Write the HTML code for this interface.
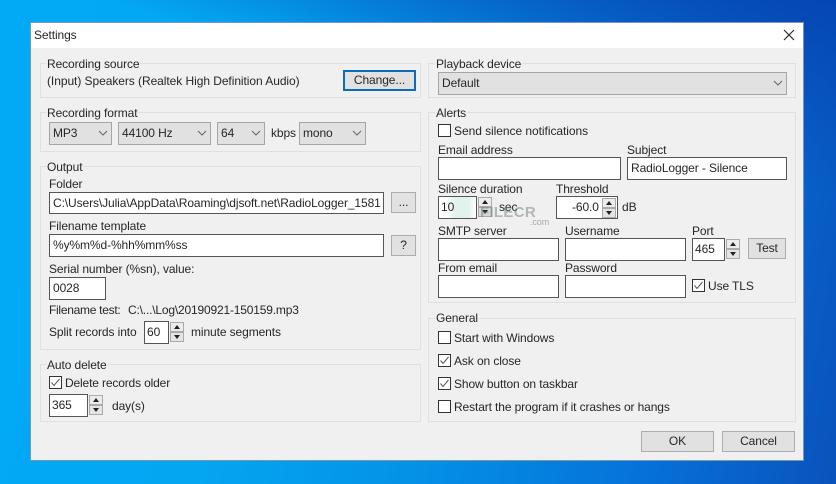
<!DOCTYPE html>
<html><head><meta charset="utf-8"><style>
html,body{margin:0;padding:0}
body{width:836px;height:484px;overflow:hidden;position:relative;font-family:"Liberation Sans",sans-serif;font-size:12px;letter-spacing:-.1px;color:#262626;
background:linear-gradient(100deg,#02aaf6 0%,#04a6f2 30%,#0490e6 55%,#0670d8 80%,#0a52bc 100%)}
#desk{position:absolute;left:0;top:0;width:836px;height:484px;background:linear-gradient(195deg,#0646b4 0%,rgba(6,80,190,0) 28%)}
#win{position:absolute;left:30px;top:22px;width:774px;height:439px;background:#f0f0f0;box-sizing:border-box;border:1px solid #7698b0}
#tb{position:absolute;left:31px;top:23px;width:772px;height:25px;background:#fff}
.t{position:absolute;white-space:nowrap;line-height:14px;height:14px}
.g{position:absolute;box-sizing:border-box;border:1px solid #e0e0e0}
.l{position:absolute;white-space:nowrap;line-height:14px;height:14px;background:#f0f0f0;padding:0 1px}
.i{position:absolute;box-sizing:border-box;background:#fff;border:1px solid #555;line-height:20px;padding-left:3px;white-space:nowrap;overflow:hidden}
.c{position:absolute;box-sizing:border-box;background:#e1e1e1;border:1px solid #a5a5a5;line-height:21px;padding-left:3px;white-space:nowrap}
.b{position:absolute;box-sizing:border-box;background:#e1e1e1;border:1px solid #adadad;line-height:19px;text-align:center;white-space:nowrap}
.k{position:absolute;width:13px;height:13px;box-sizing:border-box;background:#fff;border:1px solid #333}
svg{position:absolute;display:block}
</style></head><body>
<div id="desk"></div>
<div id="win"></div>
<div id="tb"></div>
<div class="t" style="left:34px;top:28px">Settings</div>
<svg style="left:783px;top:29px" width="12" height="12"><path d="M1 1L11 11M11 1L1 11" stroke="#222" stroke-width="1.1" fill="none"/></svg>

<div class="g" style="left:40px;top:63px;width:381px;height:35px"></div>
<div class="l" style="left:46px;top:57px">Recording source</div>
<div class="t" style="left:47px;top:74px;letter-spacing:-.06px">(Input) Speakers (Realtek High Definition Audio)</div>
<div class="b" style="left:343px;top:70px;width:73px;height:21px;border:2px solid #0e6cb4;line-height:17px">Change...</div>

<div class="g" style="left:40px;top:112px;width:381px;height:40px"></div>
<div class="l" style="left:46px;top:106px">Recording format</div>
<div class="c" style="left:49px;top:122px;width:63px;height:23px">MP3</div>
<svg style="left:98px;top:130px" width="11" height="7"><path d="M1 1L5 5L9 1" stroke="#666" fill="none"/></svg>
<div class="c" style="left:118px;top:122px;width:93px;height:23px">44100 Hz</div>
<svg style="left:197px;top:130px" width="11" height="7"><path d="M1 1L5 5L9 1" stroke="#666" fill="none"/></svg>
<div class="c" style="left:217px;top:122px;width:48px;height:23px">64</div>
<svg style="left:251px;top:130px" width="11" height="7"><path d="M1 1L5 5L9 1" stroke="#666" fill="none"/></svg>
<div class="t" style="left:271px;top:126px">kbps</div>
<div class="c" style="left:299px;top:122px;width:67px;height:23px">mono</div>
<svg style="left:352px;top:130px" width="11" height="7"><path d="M1 1L5 5L9 1" stroke="#666" fill="none"/></svg>

<div class="g" style="left:40px;top:166px;width:381px;height:184px"></div>
<div class="l" style="left:46px;top:160px">Output</div>
<div class="t" style="left:49px;top:177px">Folder</div>
<div class="i" style="left:49px;top:192px;width:335px;height:22px">C:\Users\Julia\AppData\Roaming\djsoft.net\RadioLogger_158<span style="letter-spacing:-2px">1</span></div>
<div class="b" style="left:391px;top:192px;width:25px;height:21px">...</div>
<div class="t" style="left:49px;top:219px">Filename template</div>
<div class="i" style="left:49px;top:234px;width:335px;height:23px">%y%m%d-%hh%mm%ss</div>
<div class="b" style="left:391px;top:235px;width:25px;height:21px">?</div>
<div class="t" style="left:49px;top:262px">Serial number (%sn), value:</div>
<div class="i" style="left:49px;top:277px;width:57px;height:23px">0028</div>
<div class="t" style="left:49px;top:303px;letter-spacing:-.28px">Filename test:</div>
<div class="t" style="left:128px;top:303px;letter-spacing:-.18px">C:\...\Log\20190921-150159.mp3</div>
<div class="t" style="left:49px;top:325px">Split records into</div>
<div class="i" style="left:144px;top:321px;width:25px;height:23px;padding-left:2px">60</div>
<svg style="left:170px;top:322px" width="14" height="20"><rect x=".5" y=".5" width="13" height="9" fill="#ececec" stroke="#aaa"/><rect x=".5" y="10.5" width="13" height="9" fill="#e4e4e4" stroke="#aaa"/><path d="M7 3L10 7H4Z M4 13H10L7 17Z" fill="#222"/></svg>
<div class="t" style="left:191px;top:325px">minute segments</div>

<div class="g" style="left:40px;top:364px;width:381px;height:58px"></div>
<div class="l" style="left:46px;top:358px">Auto delete</div>
<div class="k" style="left:49px;top:376px"></div>
<svg style="left:49px;top:376px" width="13" height="13"><path d="M2.5 6.5L5 9.5L10.5 3" stroke="#555" fill="none"/></svg>
<div class="t" style="left:65px;top:376px;letter-spacing:-.15px">Delete records older</div>
<div class="i" style="left:49px;top:394px;width:39px;height:23px;padding-left:2px">365</div>
<svg style="left:89px;top:395px" width="14" height="20"><rect x=".5" y=".5" width="13" height="9" fill="#ececec" stroke="#aaa"/><rect x=".5" y="10.5" width="13" height="9" fill="#e4e4e4" stroke="#aaa"/><path d="M7 3L10 7H4Z M4 13H10L7 17Z" fill="#222"/></svg>
<div class="t" style="left:112px;top:399px">day(s)</div>

<div class="g" style="left:428px;top:63px;width:368px;height:35px"></div>
<div class="l" style="left:435px;top:57px">Playback device</div>
<div class="c" style="left:438px;top:72px;width:349px;height:23px">Default</div>
<svg style="left:773px;top:80px" width="11" height="7"><path d="M1 1L5 5L9 1" stroke="#666" fill="none"/></svg>

<div class="g" style="left:428px;top:112px;width:368px;height:191px"></div>
<div class="l" style="left:435px;top:106px">Alerts</div>
<div class="k" style="left:438px;top:124px"></div>
<div class="t" style="left:454px;top:124px;letter-spacing:-.05px">Send silence notifications</div>
<div class="t" style="left:438px;top:143px">Email address</div>
<div class="t" style="left:627px;top:143px">Subject</div>
<div class="i" style="left:438px;top:157px;width:183px;height:23px"></div>
<div class="i" style="left:627px;top:157px;width:160px;height:23px">RadioLogger - Silence</div>
<div class="t" style="left:438px;top:182px">Silence duration</div>
<div class="t" style="left:556px;top:182px">Threshold</div>
<div class="i" style="left:438px;top:196px;width:39px;height:23px;padding-left:2px;background:linear-gradient(90deg,#fff 20%,#e2f3ec 45%,#e2f3ec 80%,#fff)">10</div>
<svg style="left:478px;top:197px" width="14" height="20"><rect x=".5" y=".5" width="13" height="9" fill="#ececec" stroke="#aaa"/><rect x=".5" y="10.5" width="13" height="9" fill="#d8d8d8" stroke="#aaa"/><path d="M7 3L10 7H4Z M4 13H10L7 17Z" fill="#222"/></svg>
<div class="t" style="left:499px;top:200px">sec</div>
<div class="t" style="left:480px;top:206px;font-weight:bold;font-size:15px;letter-spacing:.3px;color:rgba(110,125,125,.5)">FILECR</div>
<div class="t" style="left:530px;top:215px;font-size:9px;color:#aaa">.com</div>
<div class="i" style="left:556px;top:196px;width:62px;height:23px;padding-left:15px">-60.0</div>
<svg style="left:602px;top:198px" width="14" height="20"><rect x=".5" y=".5" width="13" height="9" fill="#ececec" stroke="#aaa"/><rect x=".5" y="10.5" width="13" height="9" fill="#e4e4e4" stroke="#aaa"/><path d="M7 3L10 7H4Z M4 13H10L7 17Z" fill="#222"/></svg>
<div class="t" style="left:622px;top:200px">dB</div>
<div class="t" style="left:438px;top:224px">SMTP server</div>
<div class="t" style="left:565px;top:224px">Username</div>
<div class="t" style="left:692px;top:224px">Port</div>
<div class="i" style="left:438px;top:238px;width:121px;height:23px"></div>
<div class="i" style="left:565px;top:238px;width:121px;height:23px"></div>
<div class="i" style="left:692px;top:238px;width:33px;height:23px;padding-left:2px">465</div>
<svg style="left:726px;top:239px" width="14" height="20"><rect x=".5" y=".5" width="13" height="9" fill="#ececec" stroke="#aaa"/><rect x=".5" y="10.5" width="13" height="9" fill="#e4e4e4" stroke="#aaa"/><path d="M7 3L10 7H4Z M4 13H10L7 17Z" fill="#222"/></svg>
<div class="b" style="left:748px;top:238px;width:38px;height:21px">Test</div>
<div class="t" style="left:438px;top:261px">From email</div>
<div class="t" style="left:565px;top:261px">Password</div>
<div class="i" style="left:438px;top:275px;width:121px;height:23px"></div>
<div class="i" style="left:565px;top:275px;width:121px;height:23px"></div>
<div class="k" style="left:692px;top:279px"></div>
<svg style="left:692px;top:279px" width="13" height="13"><path d="M2.5 6.5L5 9.5L10.5 3" stroke="#555" fill="none"/></svg>
<div class="t" style="left:708px;top:279px">Use TLS</div>

<div class="g" style="left:428px;top:318px;width:368px;height:104px"></div>
<div class="l" style="left:435px;top:311px">General</div>
<div class="k" style="left:438px;top:331px"></div>
<div class="t" style="left:454px;top:331px">Start with Windows</div>
<div class="k" style="left:438px;top:354px"></div>
<svg style="left:438px;top:354px" width="13" height="13"><path d="M2.5 6.5L5 9.5L10.5 3" stroke="#555" fill="none"/></svg>
<div class="t" style="left:454px;top:354px">Ask on close</div>
<div class="k" style="left:438px;top:377px"></div>
<svg style="left:438px;top:377px" width="13" height="13"><path d="M2.5 6.5L5 9.5L10.5 3" stroke="#555" fill="none"/></svg>
<div class="t" style="left:454px;top:377px">Show button on taskbar</div>
<div class="k" style="left:438px;top:400px"></div>
<div class="t" style="left:454px;top:400px;letter-spacing:-.12px">Restart the program if it crashes or hangs</div>

<div class="b" style="left:641px;top:431px;width:73px;height:21px">OK</div>
<div class="b" style="left:722px;top:431px;width:73px;height:21px">Cancel</div>
</body></html>
